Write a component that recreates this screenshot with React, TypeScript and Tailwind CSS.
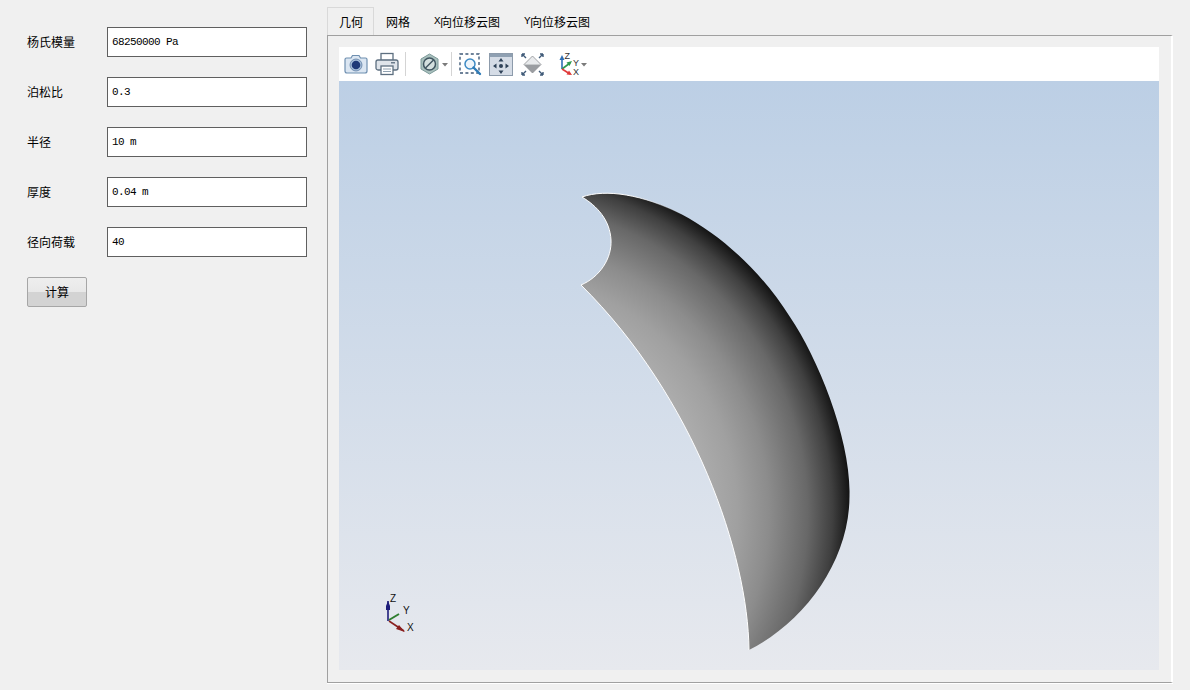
import React from "react";

const fields = [
  { label: "杨氏模量", value: "68250000 Pa" },
  { label: "泊松比", value: "0.3" },
  { label: "半径", value: "10 m" },
  { label: "厚度", value: "0.04 m" },
  { label: "径向荷载", value: "40" },
];

const tabs = [
  { prefix: "", text: "几何" },
  { prefix: "", text: "网格" },
  { prefix: "X", text: "向位移云图" },
  { prefix: "Y", text: "向位移云图" },
];

// outline of the shell in page pixels
const topEdge = "C606 188.5 643 194.5 681.5 214.25";
const outerEdge = "C720 234.75 760 269.5 790 317 C818 358 851 440 849.5 495 C850 560 805 622 749 650";
const innerEdge = "C748 555 695 398 581 285";
const notch = "C600 277 612 258 611 240 C610 220 597 206 582 197";

const shellPath = `M582 197 ${topEdge} ${outerEdge} ${innerEdge} ${notch} Z`;
const whiteEdges = `M749 650 ${innerEdge} ${notch}`;

const CameraIcon = () => (
  <svg width="24" height="22" viewBox="0 0 24 22" className="ml-[5px]">
    <path d="M1 6.5 Q1 5 2.5 5 H7 L8.5 2.5 H15 L16.5 5 H21.5 Q23 5 23 6.5 V18 Q23 20 21 20 H3 Q1 20 1 18 Z" fill="#dbe6f2" stroke="#6f8fb0" strokeWidth="1.2" />
    <circle cx="12" cy="12" r="6" fill="#a9c0da" />
    <circle cx="12" cy="12" r="4.3" fill="#1f3a78" />
    <circle cx="12" cy="12" r="6" fill="none" stroke="#5f7fa5" strokeWidth="0.8" />
  </svg>
);

const PrinterIcon = () => (
  <svg width="24" height="24" viewBox="0 0 24 24" className="ml-[7px]">
    <rect x="6" y="1.5" width="12" height="7" fill="#fff" stroke="#5d6f80" strokeWidth="1.3" />
    <rect x="1" y="8" width="22" height="10" rx="2" fill="#dfe4ea" stroke="#5d6f80" strokeWidth="1.3" />
    <rect x="16" y="10" width="4" height="1.5" fill="#6b7b8b" />
    <rect x="6" y="14" width="12" height="8.5" fill="#fff" stroke="#5d6f80" strokeWidth="1.3" />
    <path d="M8 17 H16 M8 19.5 H16" stroke="#8fa0b0" strokeWidth="1" />
  </svg>
);

const Separator = () => <div className="w-px h-[24px] bg-[#d4d4d4]" />;

const Caret = () => (
  <svg width="6" height="4" viewBox="0 0 6 4" className="mt-[1px]">
    <path d="M0 0 H6 L3 3.5 Z" fill="#7b7b7b" />
  </svg>
);

const HideIcon = () => (
  <svg width="19" height="22" viewBox="0 0 19 22">
    <path d="M9.5 1 L18 6 V16 L9.5 21 L1 16 V6 Z" fill="#a9c0bd" stroke="#7d9a9a" strokeWidth="1" />
    <circle cx="9.5" cy="11" r="6" fill="#d4e0df" stroke="#3f5560" strokeWidth="1.5" />
    <path d="M5.5 15 L13.5 7" stroke="#3f5560" strokeWidth="1.5" />
  </svg>
);

const ZoomBoxIcon = () => (
  <svg width="23" height="23" viewBox="0 0 23 23">
    <rect x="1" y="1" width="19" height="19" fill="none" stroke="#3f5a78" strokeWidth="1.4" strokeDasharray="3 2.4" />
    <circle cx="11" cy="11" r="5" fill="#eef5fb" stroke="#3d8ac4" strokeWidth="1.5" />
    <path d="M14.5 14.5 L21 21" stroke="#2f7cb8" strokeWidth="2.4" strokeLinecap="round" />
  </svg>
);

const PanIcon = () => (
  <div className="w-[24px] h-[23px] bg-[#d5dce6] border border-[#8d9bab] flex flex-col">
    <div className="h-[3px] bg-[#8fa0b2]" />
    <svg width="22" height="18" viewBox="0 0 22 18">
      <circle cx="11" cy="9" r="2" fill="#2f4258" />
      <path d="M11 1 L13.5 4.5 H8.5 Z M11 17 L13.5 13.5 H8.5 Z M3 9 L6.5 6.5 V11.5 Z M19 9 L15.5 6.5 V11.5 Z" fill="#2f4258" />
    </svg>
  </div>
);

const FitIcon = () => (
  <svg width="23" height="23" viewBox="0 0 23 23">
    <path d="M11.5 3 L20 11.5 H3 Z" fill="#e8eaec" />
    <path d="M3 11.5 H20 L11.5 20 Z" fill="#9a9da1" />
    <path d="M11.5 3 L20 11.5 L11.5 20 L3 11.5 Z" fill="none" stroke="#8a8d91" strokeWidth="0.8" />
    <path d="M1 1 L5 5 M1 1 H4 M1 1 V4 M22 1 L18 5 M22 1 H19 M22 1 V4 M1 22 L5 18 M1 22 H4 M1 22 V19 M22 22 L18 18 M22 22 H19 M22 22 V19" stroke="#3f5a78" strokeWidth="1.4" fill="none" />
  </svg>
);

const AxesIcon = () => (
  <svg width="22" height="24" viewBox="0 0 22 24" className="font-['Liberation_Sans',sans-serif]">
    <path d="M3 17 V6" stroke="#2f6fb5" strokeWidth="1.6" />
    <path d="M3 3 L5.5 8 H0.5 Z" fill="#2f6fb5" />
    <path d="M3 17 L11 11" stroke="#2f9a4f" strokeWidth="1.6" />
    <path d="M13 9 L10.5 14 L7.5 10.5 Z" fill="#2f9a4f" />
    <path d="M3 17 L11 22" stroke="#e03a3a" strokeWidth="1.6" />
    <path d="M13 23 L7.5 22.5 L10 18.5 Z" fill="#e03a3a" />
    <text x="5.5" y="7" fontSize="9" fill="#333">Z</text>
    <text x="14" y="13.5" fontSize="9" fill="#333">Y</text>
    <text x="14" y="23" fontSize="9" fill="#333">X</text>
  </svg>
);

const Viewport = () => (
  <div className="flex-1 bg-[linear-gradient(to_bottom,#bccfe5,#e7e9ee)]">
    <svg viewBox="339 81 820 589" className="w-[820px] h-[589px] block">
      <defs>
        <radialGradient id="shell" gradientUnits="userSpaceOnUse" cx="498" cy="513" r="352">
          <stop offset="0.58" stopColor="#adadad" />
          <stop offset="0.68" stopColor="#a0a0a0" />
          <stop offset="0.77" stopColor="#8c8c8c" />
          <stop offset="0.88" stopColor="#686868" />
          <stop offset="0.95" stopColor="#404040" />
          <stop offset="1" stopColor="#141414" />
        </radialGradient>
        <linearGradient id="topFade" gradientUnits="userSpaceOnUse" x1="630" y1="0" x2="685" y2="0">
          <stop offset="0" stopColor="#ffffff" />
          <stop offset="1" stopColor="#ffffff" stopOpacity="0" />
        </linearGradient>
      </defs>
      <path d={shellPath} fill="url(#shell)" />
      <path d={whiteEdges} fill="none" stroke="#ffffff" strokeWidth="1" />
      <path d={`M582 197 ${topEdge}`} fill="none" stroke="url(#topFade)" strokeWidth="1" />
      <path d="M388 621 V601" stroke="#1d1d7a" strokeWidth="1.6" />
      <path d="M388 601 L390 606 V610 H386 V606 Z" fill="#1d1d7a" />
      <path d="M389 620 L399 614" stroke="#2e7d2e" strokeWidth="2" />
      <path d="M389 621 L404 631" stroke="#8a1f1f" strokeWidth="1.6" />
      <path d="M405 632 L396 629 L399 625 Z" fill="#8a1f1f" />
      <g fontFamily="'Liberation Sans', sans-serif" fontSize="10" fill="#111">
        <text x="390" y="602">Z</text>
        <text x="403" y="614">Y</text>
        <text x="407" y="631">X</text>
      </g>
    </svg>
  </div>
);

export default function App() {
  return (
    <div className="flex w-[1190px] h-[690px] bg-[#f0f0f0] text-[12px] text-black font-['Noto_Sans_CJK_SC','Liberation_Sans',sans-serif] overflow-hidden">
      <div className="w-[327px] pt-[27px] pl-[27px] flex flex-col gap-5">
        {fields.map((f) => (
          <div key={f.label} className="flex items-center h-[30px]">
            <span className="w-[80px]">{f.label}</span>
            <input
              readOnly
              value={f.value}
              className="w-[200px] h-[30px] bg-white border border-[#5f5f5f] pl-[4px] text-[11px] tracking-[-0.6px] font-['Liberation_Mono',monospace] outline-none"
            />
          </div>
        ))}
        <button className="w-[60px] h-[30px] rounded-[2px] border border-[#a6a6a6] bg-[linear-gradient(to_bottom,#eeeeee_0%,#e8e8e8_50%,#d3d3d3_50%,#d3d3d3_100%)]">
          计算
        </button>
      </div>

      <div className="w-[846px] pt-[7px] pb-[7px] flex flex-col">
        <div className="flex h-[29px]">
          {tabs.map((t, i) => (
            <div
              key={t.text + i}
              className={
                i === 0
                  ? "px-[11px] w-[47px] h-[29px] flex items-center whitespace-nowrap border border-b-0 border-[#d9d9d9] bg-[#f0f0f0]"
                  : "px-3 h-[29px] flex items-center whitespace-nowrap"
              }
            >
              {t.prefix && (
                <span className="w-[6px] text-[11px] tracking-[-0.6px] font-['Liberation_Mono',monospace]">
                  {t.prefix}
                </span>
              )}
              {t.text}
            </div>
          ))}
        </div>
        <div className="flex-1 -mt-px border border-[#a0a0a0] border-r-white border-r-2 shadow-[0_1px_0_#ffffff] pt-[11px] pl-[11px] pr-[11px] pb-[12px] flex flex-col">
          <div className="w-[820px] flex-1 flex flex-col">
            <div className="h-[34px] bg-white flex items-center shrink-0">
              <CameraIcon />
              <PrinterIcon />
              <div className="ml-[6px]">
                <Separator />
              </div>
              <div className="ml-[14px] flex items-center gap-[3px]">
                <HideIcon />
                <Caret />
              </div>
              <div className="ml-[3px]">
                <Separator />
              </div>
              <div className="ml-[7px]">
                <ZoomBoxIcon />
              </div>
              <div className="ml-[7px]">
                <PanIcon />
              </div>
              <div className="ml-[8px]">
                <FitIcon />
              </div>
              <div className="ml-[15px] flex items-center">
                <AxesIcon />
                <Caret />
              </div>
            </div>
            <Viewport />
          </div>
        </div>
      </div>
    </div>
  );
}
